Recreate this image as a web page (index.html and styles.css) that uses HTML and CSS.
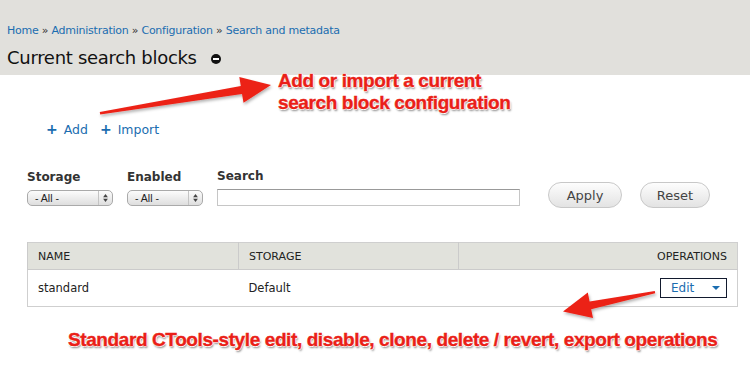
FILE: index.html
```html
<!DOCTYPE html>
<html lang="en">
<head>
<meta charset="UTF-8">
<title>Current search blocks</title>
<link rel="stylesheet" href="styles.css">
</head>
<body>
<div class="page-header">
  <div class="breadcrumb">
    <a href="#">Home</a> » <a href="#">Administration</a> » <a href="#">Configuration</a> » <a href="#">Search and metadata</a>
  </div>
  <h1>Current search blocks <span class="help-toggle"></span></h1>
</div>

<div class="content">
  <ul class="action-links">
    <li><a href="#"><span class="plus">+</span> Add</a></li>
    <li><a href="#"><span class="plus">+</span> Import</a></li>
  </ul>

  <form class="filters">
    <div class="filter">
      <label>Storage</label>
      <div class="select select-storage">- All -<span class="spin"><svg viewBox="0 0 6 10"><path d="M3 0L6 4H0z M3 10L0 6H6z" fill="#444"/></svg></span></div>
    </div>
    <div class="filter">
      <label>Enabled</label>
      <div class="select select-enabled">- All -<span class="spin"><svg viewBox="0 0 6 10"><path d="M3 0L6 4H0z M3 10L0 6H6z" fill="#444"/></svg></span></div>
    </div>
    <div class="filter">
      <label>Search</label>
      <input type="text" class="search-input">
    </div>
    <button type="button" class="btn btn-apply">Apply</button>
    <button type="button" class="btn">Reset</button>
  </form>

  <table class="blocks">
    <thead>
      <tr><th class="col-name">Name</th><th class="col-storage">Storage</th><th class="col-ops">Operations</th></tr>
    </thead>
    <tbody>
      <tr>
        <td>standard</td>
        <td>Default</td>
        <td class="ops"><span class="edit-btn"><a href="#">Edit</a><span class="caret"></span></span></td>
      </tr>
    </tbody>
  </table>
</div>

<!-- annotations drawn over the screenshot -->
<svg class="arrows" viewBox="0 0 750 367" width="750" height="367">
  <defs>
    <filter id="sh" x="-10%" y="-30%" width="120%" height="160%">
      <feDropShadow dx="1" dy="2" stdDeviation="1.5" flood-color="#000" flood-opacity="0.3"/>
    </filter>
  </defs>
  <polygon filter="url(#sh)" fill="#ec2219" points="99.8,112 240.8,85.9 239.3,77.1 271,85 243.5,102.7 242,93.9 100.2,114.5"/>
  <polygon filter="url(#sh)" fill="#ec2219" points="655.2,293.2 591.2,309.2 593,318 563,311.5 587.8,292.6 589.6,301.4 654.8,291"/>
</svg>
<div class="note note-top">Add or import a current<br>search block configuration</div>
<div class="note note-bottom">Standard CTools-style edit, disable, clone, delete / revert, export operations</div>
</body>
</html>
```

FILE: styles.css
```css
body {
  margin: 0;
  font-family: "DejaVu Sans", Verdana, sans-serif;
  color: #333;
  background: #fff;
  position: relative;
  width: 750px;
  height: 367px;
  overflow: hidden;
}

a {
  color: #0074bd;
  text-decoration: none;
}

.page-header {
  background: #e1e0dc;
  height: 75px;
  padding: 24px 0 0 7px;
  box-sizing: border-box;
}
.breadcrumb {
  font-size: 11px;
  color: #333;
  line-height: 14px;
  letter-spacing: -0.25px;
}
.breadcrumb a {
  color: #1b6db0;
}
h1 {
  margin: 9px 0 0;
  font-size: 18px;
  font-weight: normal;
  color: #111;
  line-height: 22px;
  letter-spacing: -0.3px;
}
.help-toggle {
  display: inline-block;
  width: 10px;
  height: 10px;
  border-radius: 50%;
  background: #111;
  position: relative;
  margin-left: 9px;
  vertical-align: 0px;
}
.help-toggle::after {
  content: "";
  position: absolute;
  left: 2px;
  top: 4px;
  width: 6px;
  height: 2px;
  background: #fff;
}

.content {
  padding: 0 12px 0 27px;
}

.action-links {
  list-style: none;
  margin: 0;
  padding: 46px 0 0 19px;
  display: flex;
  gap: 12px;
  font-size: 12.5px;
  line-height: 16px;
}
.action-links a {
  color: #1b6db0;
}
.plus {
  font-weight: bold;
  font-size: 14px;
  margin-right: 2px;
}

.filters {
  display: flex;
  align-items: flex-end;
  margin-top: 30px;
}
.filter {
  display: flex;
  flex-direction: column;
  margin-right: 14px;
}
.filter label {
  font-size: 12px;
  font-weight: bold;
  color: #333;
  line-height: 14px;
  margin-bottom: 6px;
  margin-top: 1px;
}
.select {
  height: 14px;
  border: 1px solid #aaa;
  border-radius: 5px;
  background: linear-gradient(#fcfcfc, #dedede);
  font-family: "Liberation Sans", Arial, sans-serif;
  font-size: 10.5px;
  color: #222;
  line-height: 14px;
  padding-left: 7px;
  display: flex;
  justify-content: space-between;
  box-sizing: content-box;
  margin-bottom: 2px;
}
.select-storage { width: 77px; }
.select-enabled { width: 67px; }
.spin {
  width: 13px;
  border-left: 1px solid #c4c4c4;
  display: flex;
  align-items: center;
  justify-content: center;
}
.spin svg {
  width: 5px;
  height: 8px;
}
.search-input {
  width: 301px;
  height: 15px;
  margin: 0 0 2px;
  padding: 0;
  border: 1px solid #c6c6c6;
  border-top-color: #999;
  font-size: 12px;
}

.btn {
  font-family: "DejaVu Sans", Verdana, sans-serif;
  font-size: 13px;
  color: #444;
  height: 26px;
  border: 1px solid #c8c8c8;
  border-radius: 13px;
  background: linear-gradient(#fdfdfd, #e3e3e3);
  padding: 0 16px;
  margin: 0 0 0 15px;
}
.btn-apply {
  margin-left: 14px;
  width: 74px;
}
.btn + .btn {
  margin-left: 18px;
  width: 70px;
  padding: 0;
}

.blocks {
  margin-top: 34px;
  width: 711px;
  border-collapse: collapse;
  border: 1px solid #cfcfcf;
  font-size: 11.5px;
}
.blocks th {
  background: #e1e2dc;
  text-transform: uppercase;
  font-weight: normal;
  text-align: left;
  color: #222;
  height: 26px;
  padding: 0 10px;
  border-left: 1px solid #cbcbcb;
  border-bottom: 1px solid #cbcbcb;
  font-size: 11px;
}
.blocks th.col-name { width: 190px; }
.blocks th.col-storage { width: 199px; }
.blocks th.col-ops { text-align: right; }
.blocks td {
  height: 36px;
  padding: 0 10px;
  color: #222;
}
.blocks td.ops {
  text-align: right;
}
.edit-btn {
  display: inline-flex;
  align-items: center;
  justify-content: space-between;
  width: 49px;
  height: 18px;
  border: 1px solid #121a2e;
  padding: 0 6px 0 10px;
  text-align: left;
}
.edit-btn a {
  font-size: 12px;
  color: #1b6db0;
}
.caret {
  width: 0;
  height: 0;
  border-left: 4px solid transparent;
  border-right: 4px solid transparent;
  border-top: 4px solid #1b6db0;
}

.arrows {
  position: absolute;
  left: 0;
  top: 0;
  pointer-events: none;
}
.note {
  position: absolute;
  font-family: "Liberation Sans", Arial, sans-serif;
  font-weight: bold;
  color: #ea1f18;
  font-size: 19px;
  line-height: 22px;
  letter-spacing: -0.4px;
  -webkit-text-stroke: 0.4px #ea1f18;
  text-shadow: -1px 0 #fff, 1px 0 #fff, 0 -1px #fff, 0 1px #fff, 1px 2px 2px rgba(0,0,0,0.45);
  white-space: nowrap;
}
.note-top {
  left: 278px;
  top: 70px;
}
.note-bottom {
  left: 68px;
  top: 329px;
}
```
